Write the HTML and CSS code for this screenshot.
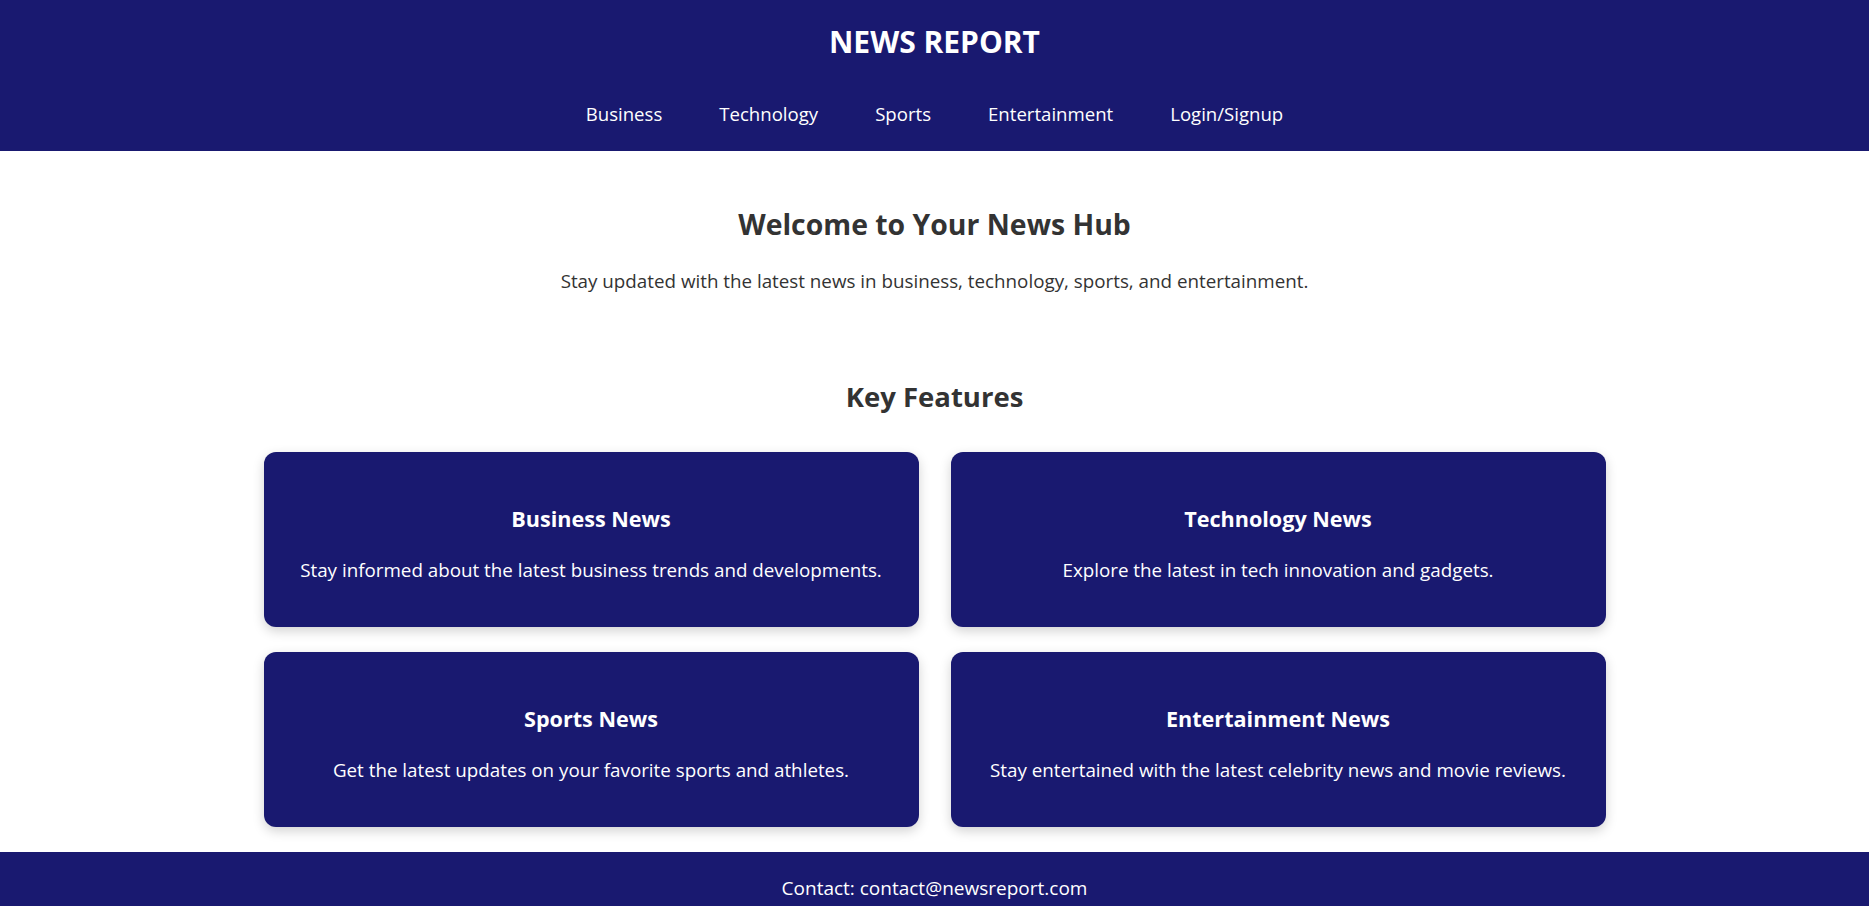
FILE: index.html
```html
<!DOCTYPE html>
<html lang="en">
<head>
<meta charset="utf-8">
<title>News Report</title>
<link rel="stylesheet" href="styles.css">
</head>
<body>
<header class="site-header">
  <h1 class="brand">NEWS REPORT</h1>
  <nav class="nav">
    <a href="#">Business</a>
    <a href="#">Technology</a>
    <a href="#">Sports</a>
    <a href="#">Entertainment</a>
    <a href="#">Login/Signup</a>
  </nav>
</header>
<main>
  <section class="hero">
    <h2 class="hero-title">Welcome to Your News Hub</h2>
    <p class="hero-text">Stay updated with the latest news in business, technology, sports, and entertainment.</p>
  </section>
  <section class="features">
    <h2 class="features-title">Key Features</h2>
    <div class="grid">
      <div class="card">
        <h3 class="card-title">Business News</h3>
        <p class="card-text">Stay informed about the latest business trends and developments.</p>
      </div>
      <div class="card">
        <h3 class="card-title">Technology News</h3>
        <p class="card-text">Explore the latest in tech innovation and gadgets.</p>
      </div>
      <div class="card">
        <h3 class="card-title">Sports News</h3>
        <p class="card-text">Get the latest updates on your favorite sports and athletes.</p>
      </div>
      <div class="card">
        <h3 class="card-title">Entertainment News</h3>
        <p class="card-text">Stay entertained with the latest celebrity news and movie reviews.</p>
      </div>
    </div>
  </section>
</main>
<footer class="site-footer">
  <p class="footer-text">Contact: contact@newsreport.com</p>
</footer>
</body>
</html>
```
FILE: styles.css
```css
* { box-sizing: border-box; }
html, body { margin: 0; padding: 0; }
body {
  font-family: "Open Sans", "Noto Sans", sans-serif;
  color: #333;
  background: #fff;
}
.site-header {
  background: #191970;
  color: #fff;
  height: 151px;
  text-align: center;
  padding-top: 23px;
}
.brand {
  margin: 0;
  font-size: 30px;
  line-height: 38px;
  font-weight: 700;
}
.nav {
  display: flex;
  justify-content: center;
  gap: 57px;
  margin-top: 40px;
}
.nav a {
  color: #fff;
  text-decoration: none;
  font-size: 18.6px;
  line-height: 26px;
}
.hero {
  text-align: center;
  padding-top: 55px;
}
.hero-title {
  margin: 0;
  font-size: 28.4px;
  line-height: 36px;
  font-weight: 700;
}
.hero-text {
  margin: 26px 0 0;
  font-size: 18.8px;
  line-height: 26px;
}
.features {
  text-align: center;
  padding-top: 85px;
}
.features-title {
  margin: 0;
  font-size: 27.5px;
  line-height: 36px;
  font-weight: 700;
}
.grid {
  display: grid;
  grid-template-columns: 655px 655px;
  column-gap: 32px;
  row-gap: 25px;
  justify-content: center;
  margin-top: 37px;
  padding-bottom: 25px;
}
.card {
  background: #191970;
  color: #fff;
  height: 175px;
  border-radius: 12px;
  box-shadow: 0 4px 12px rgba(0, 0, 0, 0.18);
  display: flex;
  flex-direction: column;
  justify-content: center;
  align-items: center;
  padding: 7px 20px 0;
}
.card-title {
  margin: 0;
  font-size: 21.6px;
  line-height: 30px;
  font-weight: 700;
}
.card-text {
  margin: 23px 0 0;
  font-size: 18.8px;
  line-height: 26px;
}
.site-footer {
  background: #191970;
  color: #fff;
  text-align: center;
  padding: 23px 0 24px;
}
.footer-text {
  margin: 0;
  font-size: 19px;
  line-height: 26px;
}
```
